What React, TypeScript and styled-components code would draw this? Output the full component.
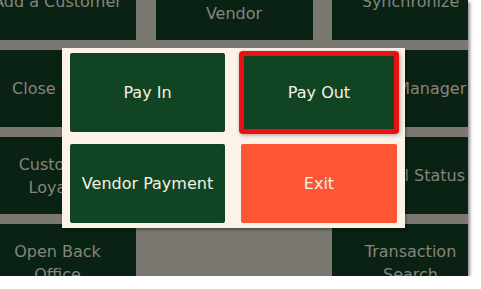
import React from 'react';
import { styled, createGlobalStyle } from 'styled-components';

type TileItem = { label: string; empty?: boolean };

const tiles: TileItem[] = [
  { label: 'Add a Customer' },
  { label: 'Return to\nVendor' },
  { label: 'Synchronize' },
  { label: 'Close Store' },
  { label: 'Cash Drawer' },
  { label: 'Shift Manager' },
  { label: 'Customer\nLoyalty' },
  { label: 'Reports' },
  { label: 'Payroll Status' },
  { label: 'Open Back\nOffice' },
  { label: '', empty: true },
  { label: 'Transaction\nSearch' },
];

type Action = { label: string; tone: 'green' | 'orange'; selected?: boolean };

const actions: Action[] = [
  { label: 'Pay In', tone: 'green' },
  { label: 'Pay Out', tone: 'green', selected: true },
  { label: 'Vendor Payment', tone: 'green' },
  { label: 'Exit', tone: 'orange' },
];

export default function App() {
  return (
    <>
      <GlobalStyle />
      <Screen>
        <TileGrid>
          {tiles.map((tile, i) => (
            <Tile key={i} $empty={tile.empty}>
              {tile.label}
            </Tile>
          ))}
        </TileGrid>
        <Dialog>
          {actions.map(action => (
            <ActionButton
              key={action.label}
              $tone={action.tone}
              $selected={action.selected}
            >
              {action.label}
            </ActionButton>
          ))}
        </Dialog>
      </Screen>
    </>
  );
}

const GlobalStyle = createGlobalStyle`
  html, body {
    margin: 0;
    padding: 0;
    background: #ffffff;
  }
  body {
    font-family: "DejaVu Sans", Verdana, sans-serif;
  }
`;

const Screen = styled.div`
  position: relative;
  width: 468px;
  height: 276px;
  overflow: hidden;
  background-color: #7a7871;
  box-shadow: 2px 2px 3px rgba(0, 0, 0, 0.45);
`;

const TileGrid = styled.div`
  display: grid;
  grid-template-columns: repeat(3, 157px);
  grid-auto-rows: 77px;
  gap: 10px 19.5px;
  margin-left: -21px;
  margin-top: -37px;
`;

const Tile = styled.div<{ $empty?: boolean }>`
  display: flex;
  align-items: center;
  justify-content: center;
  text-align: center;
  white-space: pre-line;
  background-color: ${props => (props.$empty ? 'transparent' : '#0a2213')};
  color: #85857c;
  font-size: 16px;
  line-height: 23px;
`;

const Dialog = styled.div`
  position: absolute;
  left: 62px;
  top: 48px;
  width: 327px;
  height: 170px;
  padding: 5px 8px;
  display: grid;
  grid-template-columns: 155px 156px;
  grid-template-rows: 79px 79px;
  gap: 12px 16px;
  background-color: #fdf2e6;
  box-shadow: 1px 2px 3px rgba(0, 0, 0, 0.35);
`;

const ActionButton = styled.div<{ $tone: 'green' | 'orange'; $selected?: boolean }>`
  display: flex;
  align-items: center;
  justify-content: center;
  border-radius: 2px;
  background-color: ${props => (props.$tone === 'orange' ? '#fe5536' : '#114422')};
  color: #f4f2e6;
  font-size: 16px;
  box-shadow: ${props =>
    props.$selected
      ? '0 0 0 2px #ec1015, inset 0 0 0 3px #ec1015, 1px 1px 4px 2px rgba(0, 0, 0, 0.35)'
      : 'none'};
`;
